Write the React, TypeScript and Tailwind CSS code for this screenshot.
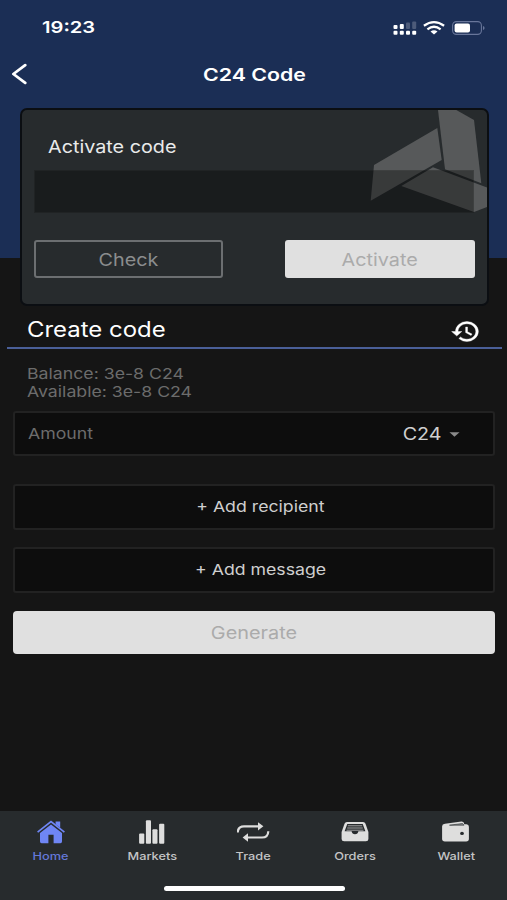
import type { ReactNode } from 'react';

type TabProps = {
  label: string;
  icon: ReactNode;
  active?: boolean;
};

function HomeIcon() {
  return (
    <svg width="28" height="24" viewBox="0 0 28 24" fill="currentColor">
      <path d="M0.6 12.2 14 1.6 27.4 12.2" fill="none" stroke="currentColor" strokeWidth="1.7" />
      <path d="M18.6 1.6h4.6v6.2l-4.6-3.6z" />
      <path d="M14 4.4 25 13v8.6q0 1.6-1.6 1.6H16.6v-8.4h-5.2v8.4H4.6Q3 23.2 3 21.6V13z" />
    </svg>
  );
}

function MarketsIcon() {
  return (
    <svg width="28" height="24" viewBox="0 0 28 24" fill="currentColor">
      <rect x="1.1" y="13.6" width="5.2" height="10.2" rx="1" />
      <rect x="7.9" y="0.3" width="5.1" height="23.5" rx="1" />
      <rect x="14.4" y="9.2" width="5.1" height="14.6" rx="1" />
      <rect x="21.1" y="3.7" width="5.2" height="20.1" rx="1" />
    </svg>
  );
}

function TradeIcon() {
  return (
    <svg width="34" height="24" viewBox="1 0 34 24" fill="none" stroke="currentColor" strokeWidth="2.2">
      <path d="M1.7 12.5Q1.9 6.3 8 6.3H23" />
      <path d="M32.3 11.2Q32.1 17.5 26 17.5H11" />
      <path d="M22 2.2 27.4 6.3 22 10.6z" fill="currentColor" stroke="none" />
      <path d="M12 13.2 6.6 17.5 12 21.8z" fill="currentColor" stroke="none" />
    </svg>
  );
}

function OrdersIcon() {
  return (
    <svg width="28" height="24" viewBox="0 0 28 24">
      <path d="M6 2h16q1.9 0 2.5 1.7L27.4 12v7q0 2.3-2.5 2.3H3.1Q.6 21.3.6 19v-7l2.9-8.3Q4.1 2 6 2z" fill="currentColor" />
      <path d="M6.3 3.9h15.4l2.7 7.4h-7q-.5 3-3.4 3t-3.4-3h-7z" fill="#272b2d" />
      <path d="M6.8 5.8h14.4M6.2 8h15.6M5.5 10.2h17" stroke="#a5a6a6" strokeWidth="1" />
    </svg>
  );
}

function WalletIcon() {
  return (
    <svg width="28" height="24" viewBox="0.5 0 28 24">
      <path d="M3.5 3.8 20 1.6q2.6-.2 2.8 2.6H25q2.4.3 2.4 2.6v12.2q0 2.4-2.8 2.4H3.4Q.6 21.4.6 19V6.2Q.6 4.2 3.5 3.8z" fill="currentColor" />
      <path d="M8 5.2 21 3.5l1.5 1.7z" fill="#8b8d8e" stroke="#272b2d" strokeWidth=".6" />
      <ellipse cx="20.5" cy="13.4" rx="1.9" ry="1.7" fill="#272b2d" />
    </svg>
  );
}

function Tab({ label, icon, active }: TabProps) {
  return (
    <div className={`flex flex-1 flex-col items-center ${active ? 'text-[#6f86f5]' : 'text-[#dededd]'}`}>
      {icon}
      <span className={`mt-1 scale-x-[1.16] text-[11px] leading-4 font-medium ${active ? 'text-[#6478d8]' : 'text-[#c4c5c6]'}`}>{label}</span>
    </div>
  );
}

function StatusBar() {
  return (
    <div className="flex h-[55px] items-center justify-between pr-[22px] pl-[42px] text-white">
      <span className="origin-left scale-x-[1.22] text-[16.5px] font-semibold">19:23</span>
      <div className="flex items-center">
        <svg width="24" height="14" viewBox="0 0 24 14" fill="currentColor">
          <rect x="0.5" y="4" width="4" height="4" rx="1" />
          <rect x="6.8" y="3" width="4" height="5" rx="1" />
          <rect x="13" y="1.5" width="4" height="6.5" rx="1" opacity=".22" />
          <rect x="19.2" y="0.5" width="4" height="7.5" rx="1" opacity=".22" />
          <rect x="0.5" y="9.7" width="4" height="4" rx="1" />
          <rect x="6.8" y="9.7" width="4" height="4" rx="1" />
          <rect x="13" y="9.7" width="4" height="4" rx="1" />
          <rect x="19.2" y="9.7" width="4" height="4" rx="1" />
        </svg>
        <svg className="ml-1.5" width="22" height="14" viewBox="0 0 22 14" fill="none" stroke="currentColor" strokeWidth="2.3">
          <path d="M.9 4.8Q11-2.4 21.1 4.8" />
          <path d="M4.4 8.3Q11 3.3 17.6 8.3" />
          <path d="M7.5 10.6Q11 8 14.5 10.6L11 13.6z" fill="currentColor" stroke="none" />
        </svg>
        <svg className="ml-[7px]" width="33" height="14" viewBox="0 0 33 14">
          <rect x=".6" y=".6" width="28.8" height="12.8" rx="3.8" fill="none" stroke="#68769a" strokeWidth="1.1" />
          <rect x="2.6" y="2.4" width="15.4" height="9.2" rx="2" fill="white" />
          <path d="M31 5q1.6.5 1.6 2T31 9z" fill="#68769a" />
        </svg>
      </div>
    </div>
  );
}

function ActivateCard() {
  return (
    <div className="relative ml-5 h-[198px] w-[469px] overflow-hidden rounded-[7px] border-2 border-[#0b0e12] bg-[#272b2d] px-3 pt-6">
      {/* Brand mark in the corner, the input lies over it */}
      <svg className="absolute top-0 right-0" width="118" height="104" viewBox="-1 0 118 104" fill="#57595a">
        <path d="M68 0H86.3L104 10 111.3 73.3 75 59.3z" />
        <path d="M4 55 67.3 18 71.7 50 .7 90.7z" />
        <path d="M63 57.3 118 77.9V96.7L104 102 31.3 76z" />
      </svg>
      <h2 className="ml-3.5 w-fit origin-left scale-x-[1.13] text-[17.5px] leading-[25px] text-[#e9eaea]">Activate code</h2>
      <div className="relative mt-[11px] h-[43px] w-[440px] border border-white/[0.03] bg-black/35" />
      <div className="mt-[27px] flex gap-[62px]">
        <button className="h-[38px] w-[189px] rounded-[3px] border-2 border-[#6c6f71] pt-0.5 text-[17.5px] text-[#8b8d8e]">
          <span className="inline-block scale-x-[1.13]">Check</span>
        </button>
        <button className="h-[38px] w-[190px] rounded-[3px] bg-[#e0e0e0] pt-0.5 text-[17.5px] text-[#ababab]">
          <span className="inline-block scale-x-[1.13]">Activate</span>
        </button>
      </div>
    </div>
  );
}

export default function App() {
  return (
    <div className="flex h-[900px] w-[507px] flex-col overflow-hidden bg-[#151515] font-['Inter',sans-serif]">
      {/* Header, the card hangs over its lower edge */}
      <header className="h-[258px] shrink-0 bg-[#1b2e55]">
        <StatusBar />
        <div className="flex h-[53px] items-center pb-[15px] text-white">
          <svg className="ml-[11px]" width="16" height="22" viewBox="0 0 16 22" fill="none" stroke="currentColor" strokeWidth="2.8" strokeLinecap="round" strokeLinejoin="round">
            <path d="M14.2 2.2 2.4 11 14.2 19.8" />
          </svg>
          <h1 className="mr-[25px] flex-1 scale-x-[1.22] pt-0.5 text-center text-[17.5px] font-semibold">C24 Code</h1>
        </div>
        <ActivateCard />
      </header>

      <main className="flex-1 pt-[48px]">
        <div className="mr-[5px] ml-[7px] flex h-[43px] items-center justify-between border-b-2 border-[#4a5f98] pt-1.5 pr-[23px] pl-5">
          <h2 className="origin-left scale-x-[1.14] text-[21px] text-white">Create code</h2>
          <svg className="mt-[3px]" width="28" height="21" viewBox="0.5 2.5 22 19" preserveAspectRatio="none" fill="white" stroke="white" strokeWidth="0.35">
            <path d="M13 3a9 9 0 0 0-9 9H1l3.89 3.89.07.14L9 12H6c0-3.87 3.13-7 7-7s7 3.13 7 7-3.13 7-7 7c-1.93 0-3.68-.79-4.94-2.06l-1.42 1.42A8.95 8.95 0 0 0 13 21a9 9 0 0 0 0-18zm-1 5v5l4.28 2.54.72-1.21-3.5-2.08V8z" />
          </svg>
        </div>

        <div className="mt-4 ml-[27px] w-fit origin-left scale-x-[1.18] text-[15px] leading-[18px] text-[#6c6c6c]">
          <p>Balance: 3e-8 C24</p>
          <p>Available: 3e-8 C24</p>
        </div>

        <div className="mx-[13px] mt-[10px] flex h-[45px] w-[482px] items-center rounded-[3px] border-2 border-[#222222] bg-[#0d0d0d] pt-0.5 pr-[33px] pl-[13px]">
          <span className="origin-left scale-x-[1.18] text-[15px] text-[#6c6c6c]">Amount</span>
          <span className="mr-[7px] ml-auto origin-right scale-x-[1.16] text-[17px] text-[#cfcfcf]">C24</span>
          <svg width="11" height="5" viewBox="0 0 12 5" fill="#8a8a8a">
            <path d="M.5 0h11L6 5z" />
          </svg>
        </div>

        <div className="mx-[13px] mt-[28px] w-[482px] text-[#cfcfcf]">
          <button className="block h-[46px] w-full rounded-[3px] border-2 border-[#222222] bg-[#0d0d0d] pt-px text-[15px]">
            <span className="ml-3 inline-block scale-x-[1.18]">+ Add recipient</span>
          </button>
          <button className="mt-[17px] block h-[46px] w-full rounded-[3px] border-2 border-[#222222] bg-[#0d0d0d] pt-px text-[15px]">
            <span className="ml-[13px] inline-block scale-x-[1.18]">+ Add message</span>
          </button>
          <button className="mt-[18px] block h-[43px] w-full rounded-[4px] bg-[#e0e0e0] pt-px text-[17.5px] text-[#ababab]">
            <span className="inline-block scale-x-[1.135]">Generate</span>
          </button>
        </div>
      </main>

      <nav className="h-[89px] shrink-0 bg-[#272b2d] pt-[9px]">
        <div className="flex">
          <Tab label="Home" icon={<HomeIcon />} active />
          <Tab label="Markets" icon={<MarketsIcon />} />
          <Tab label="Trade" icon={<TradeIcon />} />
          <Tab label="Orders" icon={<OrdersIcon />} />
          <Tab label="Wallet" icon={<WalletIcon />} />
        </div>
        <div className="mt-[22px] ml-[164px] h-[5px] w-[181px] rounded-full bg-white" />
      </nav>
    </div>
  );
}
